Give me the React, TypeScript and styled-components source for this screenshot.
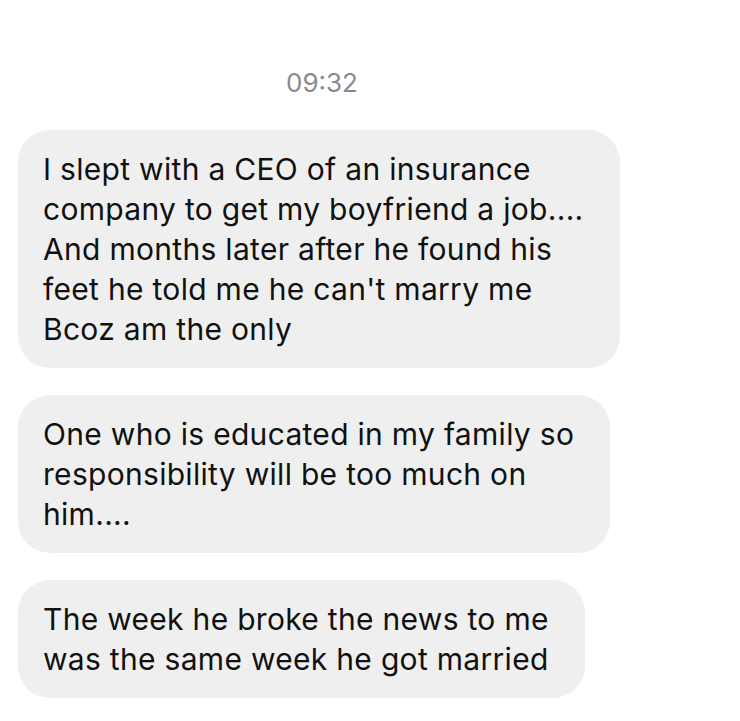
import React from 'react';
import styled, { createGlobalStyle } from 'styled-components';

const GlobalStyle = createGlobalStyle`
  body {
    margin: 0;
    background: #ffffff;
    font-family: Inter, "Liberation Sans", Arial, sans-serif;
  }
`;

const Thread = styled.div`
  width: 740px;
  height: 721px;
  box-sizing: border-box;
  padding: 67px 0 0 18px;
  display: flex;
  flex-direction: column;
  align-items: flex-start;
  overflow: hidden;
`;

const Timestamp = styled.div`
  width: 608px;
  text-align: center;
  font-size: 26px;
  line-height: 32px;
  color: #8a8a8e;
  margin-bottom: 31px;
`;

const Messages = styled.div`
  display: flex;
  flex-direction: column;
  align-items: flex-start;
  gap: 27px;
`;

const Bubble = styled.div<{ $width: number }>`
  width: ${(p) => p.$width}px;
  box-sizing: border-box;
  padding: 19px 18px 19px 25px;
  background: #efefef;
  border-radius: 32px;
  color: #111111;
  font-size: 30px;
  line-height: 40px;
  letter-spacing: 0.3px;
  white-space: pre-line;
`;

const messages = [
  {
    width: 602,
    text: "I slept with a CEO of an insurance\ncompany to get my boyfriend a job....\nAnd months later after he found his\nfeet he told me he can't marry me\nBcoz am the only",
  },
  {
    width: 592,
    text: 'One who is educated in my family so\nresponsibility will be too much on\nhim....',
  },
  {
    width: 567,
    text: 'The week he broke the news to me\nwas the same week he got married',
  },
];

const App = () => (
  <>
    <GlobalStyle />
    <Thread>
      <Timestamp>09:32</Timestamp>
      <Messages>
        {messages.map((m, i) => (
          <Bubble key={i} $width={m.width}>
            {m.text}
          </Bubble>
        ))}
      </Messages>
    </Thread>
  </>
);

export default App;
